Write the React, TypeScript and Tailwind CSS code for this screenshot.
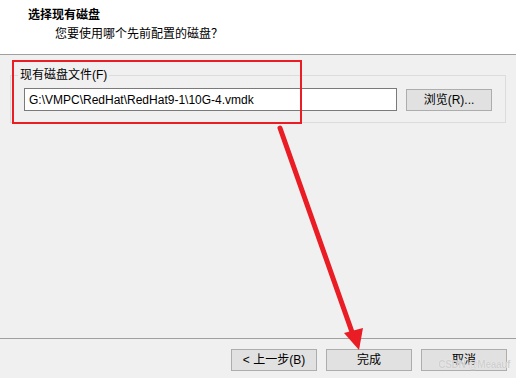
import React from "react";

const font = { fontFamily: '"Liberation Sans", "Noto Sans CJK SC", sans-serif' };

function WinButton({ label, className = "" }: { label: string; className?: string }) {
  return (
    <button
      type="button"
      className={`h-[22px] w-[86px] border border-[#adadad] bg-[#e1e1e1] text-[12px] leading-none text-black ${className}`}
    >
      {label}
    </button>
  );
}

export default function App() {
  return (
    <div
      className="relative flex h-[378px] w-[516px] flex-col overflow-hidden bg-[#f0f0f0] text-[12px] text-black"
      style={font}
    >
      {/* header */}
      <div className="h-[55px] border-b border-[#a0a0a0] bg-white pt-[6px]">
        <div className="pl-[28px] text-[12px] font-bold leading-[18px]">选择现有磁盘</div>
        <div className="pl-[55px] pt-[1px] text-[12px] leading-[18px]">您要使用哪个先前配置的磁盘？</div>
      </div>

      {/* body */}
      <div className="flex-1 border-b border-[#a0a0a0] px-[10px] pt-[12px]">
        <fieldset className="h-[56px] w-[496px] border border-[#dcdcdc] px-[13px]">
          <legend className="ml-[-6px] px-[2px] text-[12px] leading-[16px]">现有磁盘文件(F)</legend>
          <div className="mt-[5px] flex items-center gap-[9px]">
            <div className="flex h-[23px] w-[373px] items-center border border-[#7a7a7a] bg-white px-[4px] text-[12px]">
              G:\VMPC\RedHat\RedHat9-1\10G-4.vmdk
            </div>
            <WinButton label="浏览(R)..." className="w-[85px]" />
          </div>
        </fieldset>
      </div>

      {/* footer */}
      <div className="flex h-[39px] items-start justify-end gap-[9px] pr-[9px] pt-[10px]">
        <WinButton label="< 上一步(B)" />
        <WinButton label="完成" />
        <WinButton label="取消" />
      </div>

      {/* annotation: red box */}
      <div className="pointer-events-none absolute left-[12px] top-[60px] h-[64px] w-[290px] border-2 border-[#ea1c24]" />

      {/* annotation: arrow */}
      <svg className="pointer-events-none absolute left-0 top-0" width="516" height="378">
        <line x1="280" y1="128" x2="352" y2="332" stroke="#ea1c24" strokeWidth="5" strokeLinecap="round" />
        <polygon points="344,333 363,328 359,350" fill="#ea1c24" />
      </svg>

      {/* watermark */}
      <div
        className="pointer-events-none absolute right-[6px] top-[359px] whitespace-nowrap text-[10px] font-bold leading-[12px] tracking-[-0.3px] text-[#cfcfcf]"
        style={{ textShadow: "0 0 1px #fff" }}
      >
        CSDN @Meaauf
      </div>
    </div>
  );
}
